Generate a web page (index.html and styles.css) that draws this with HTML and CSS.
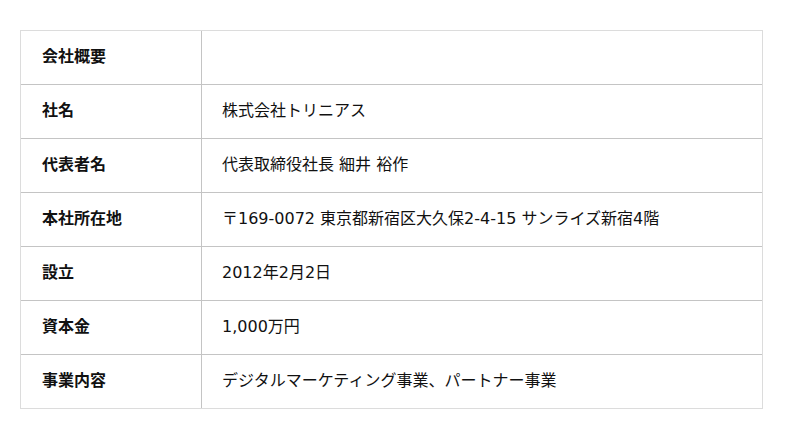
FILE: index.html
```html
<!DOCTYPE html>
<html lang="ja">
<head>
<meta charset="utf-8">
<link rel="stylesheet" href="styles.css">
</head>
<body>
<table class="company">
  <tr><th>会社概要</th><td></td></tr>
  <tr><th>社名</th><td>株式会社トリニアス</td></tr>
  <tr><th>代表者名</th><td>代表取締役社長 細井 裕作</td></tr>
  <tr><th>本社所在地</th><td>〒169-0072 東京都新宿区大久保2-4-15 サンライズ新宿4階</td></tr>
  <tr><th>設立</th><td>2012年2月2日</td></tr>
  <tr><th>資本金</th><td>1,000万円</td></tr>
  <tr><th>事業内容</th><td>デジタルマーケティング事業、パートナー事業</td></tr>
</table>
</body>
</html>
```
FILE: styles.css
```css
html, body {
  margin: 0;
  background: #fff;
}
body {
  padding: 30px 38px 0 20px;
  font-family: "DejaVu Sans", "Noto Sans CJK JP", sans-serif;
  font-size: 16px;
  line-height: 20px;
  color: #111;
}
.company {
  width: 743px;
  border-collapse: separate;
  border-spacing: 0;
  border: 1px solid #dcdcdc;
}
.company th,
.company td {
  box-sizing: border-box;
  height: 54px;
  padding: 0 0 2px 21px;
  text-align: left;
  vertical-align: middle;
  border-bottom: 1px solid #c4c4c4;
}
.company tr:last-child th,
.company tr:last-child td {
  border-bottom: none;
  height: 53px;
}
.company th {
  width: 181px;
  font-weight: bold;
  border-right: 1px solid #c4c4c4;
}
.company td {
  padding-left: 20px;
  font-weight: normal;
}
```
